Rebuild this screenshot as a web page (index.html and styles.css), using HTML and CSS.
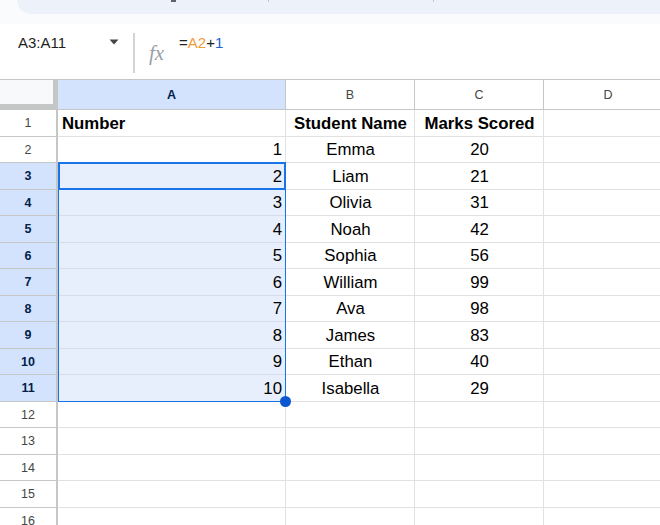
FILE: index.html
```html
<!DOCTYPE html>
<html>
<head>
<meta charset="utf-8">
<link rel="stylesheet" href="styles.css">
</head>
<body>
<div class="topbar">
  <div class="pill">
    <span class="glyph"></span>
    <span class="tick t1"></span>
    <span class="tick t2"></span>
  </div>
</div>
<div class="formula-bar">
  <div class="namebox">
    <span class="range">A3:A11</span>
    <svg class="caret" width="10" height="6" viewBox="0 0 10 6"><path d="M0.5 0.5 L9.5 0.5 L5 5.5 Z" fill="#444746"/></svg>
  </div>
  <div class="sep"></div>
  <div class="fx">fx</div>
  <div class="formula"><span class="op">=</span><span class="ref">A2</span><span class="op">+</span><span class="lit">1</span></div>
</div>
<div class="sheet">
  <div class="corner"></div>
  <div class="colh selh">A</div>
  <div class="colh">B</div>
  <div class="colh">C</div>
  <div class="colh">D</div>

  <div class="rowh">1</div><div class="cell left bold">Number</div><div class="cell center bold">Student Name</div><div class="cell center bold">Marks Scored</div><div class="cell"></div>
  <div class="rowh">2</div><div class="cell right">1</div><div class="cell center">Emma</div><div class="cell center">20</div><div class="cell"></div>
  <div class="rowh selr">3</div><div class="cell right sel">2</div><div class="cell center">Liam</div><div class="cell center">21</div><div class="cell"></div>
  <div class="rowh selr">4</div><div class="cell right sel">3</div><div class="cell center">Olivia</div><div class="cell center">31</div><div class="cell"></div>
  <div class="rowh selr">5</div><div class="cell right sel">4</div><div class="cell center">Noah</div><div class="cell center">42</div><div class="cell"></div>
  <div class="rowh selr">6</div><div class="cell right sel">5</div><div class="cell center">Sophia</div><div class="cell center">56</div><div class="cell"></div>
  <div class="rowh selr">7</div><div class="cell right sel">6</div><div class="cell center">William</div><div class="cell center">99</div><div class="cell"></div>
  <div class="rowh selr">8</div><div class="cell right sel">7</div><div class="cell center">Ava</div><div class="cell center">98</div><div class="cell"></div>
  <div class="rowh selr">9</div><div class="cell right sel">8</div><div class="cell center">James</div><div class="cell center">83</div><div class="cell"></div>
  <div class="rowh selr">10</div><div class="cell right sel">9</div><div class="cell center">Ethan</div><div class="cell center">40</div><div class="cell"></div>
  <div class="rowh selr">11</div><div class="cell right sel">10</div><div class="cell center">Isabella</div><div class="cell center">29</div><div class="cell"></div>
  <div class="rowh">12</div><div class="cell"></div><div class="cell"></div><div class="cell"></div><div class="cell"></div>
  <div class="rowh">13</div><div class="cell"></div><div class="cell"></div><div class="cell"></div><div class="cell"></div>
  <div class="rowh">14</div><div class="cell"></div><div class="cell"></div><div class="cell"></div><div class="cell"></div>
  <div class="rowh">15</div><div class="cell"></div><div class="cell"></div><div class="cell"></div><div class="cell"></div>
  <div class="rowh">16</div><div class="cell"></div><div class="cell"></div><div class="cell"></div><div class="cell"></div>

  <div class="range-box"></div>
  <div class="active-box"></div>
  <div class="fill-handle"></div>
</div>
</body>
</html>
```

FILE: styles.css
```css
html, body {
  margin: 0;
  padding: 0;
  width: 660px;
  height: 525px;
  overflow: hidden;
  background: #ffffff;
  font-family: "Liberation Sans", Arial, sans-serif;
}

.topbar {
  height: 24px;
  background: #f9fbfd;
  position: relative;
}

.pill {
  position: relative;
  margin-left: 17px;
  height: 14px;
  background: #edf2fa;
  border-radius: 0 0 0 18px;
}

.glyph {
  position: absolute;
  left: 154px;
  top: 0;
  width: 5px;
  height: 2px;
  background: #5f6368;
}

.tick {
  position: absolute;
  top: 0;
  width: 1px;
  height: 2px;
  background: #c4c7c5;
}
.t1 { left: 251px; }
.t2 { left: 416px; }

.formula-bar {
  height: 55px;
  display: flex;
  align-items: flex-start;
  background: #ffffff;
}

.namebox {
  width: 133px;
  display: flex;
  align-items: flex-start;
  padding-top: 10px;
  padding-left: 18px;
  box-sizing: border-box;
  height: 55px;
}

.range {
  font-size: 15px;
  color: #1f1f1f;
  line-height: 17px;
  width: 91px;
}

.caret {
  margin-top: 5px;
}

.sep {
  width: 2px;
  height: 40px;
  margin-top: 9px;
  background: #d3d3d3;
}

.fx {
  margin-left: 14px;
  margin-top: 19px;
  font-family: "Liberation Serif", "Times New Roman", serif;
  font-style: italic;
  font-size: 21px;
  line-height: 20px;
  color: #9aa0a6;
  width: 30px;
}

.formula {
  margin-top: 10px;
  font-size: 15px;
  line-height: 17px;
}
.op { color: #202124; }
.ref { color: #f29b38; }
.lit { color: #1a5fd6; }

.sheet {
  position: relative;
  display: grid;
  grid-template-columns: 58px 228px 129px 129px 129px;
  grid-template-rows: 30px;
  grid-auto-rows: 26.5px;
  border-top: 1px solid #c4c7c5;
}

.corner {
  box-sizing: border-box;
  background: #f8f9fa;
  border-right: 5px solid #c4c7c5;
  border-bottom: 6px solid #c4c7c5;
  width: 58px;
}

.colh {
  box-sizing: border-box;
  border-right: 1px solid #c4c7c5;
  border-bottom: 1px solid #c4c7c5;
  display: flex;
  align-items: center;
  justify-content: center;
  font-size: 12.5px;
  color: #444746;
  padding-top: 1px;
}

.selh {
  background: #d3e3fd;
  color: #041e49;
  font-weight: bold;
}

.rowh {
  box-sizing: border-box;
  border-right: 2px solid #c4c7c5;
  border-bottom: 1px solid #c4c7c5;
  display: flex;
  align-items: center;
  justify-content: center;
  font-size: 12.5px;
  color: #444746;
  padding-top: 1px;
}

.selr {
  background: #d3e3fd;
  color: #041e49;
  font-weight: bold;
}

.cell {
  box-sizing: border-box;
  border-right: 1px solid #e1e1e1;
  border-bottom: 1px solid #e1e1e1;
  display: flex;
  align-items: center;
  font-size: 16.8px;
  color: #000000;
  padding: 2px 3px 0 4px;
  white-space: nowrap;
  overflow: hidden;
}

.left { justify-content: flex-start; }
.right { justify-content: flex-end; }
.center { justify-content: center; }
.bold { font-weight: bold; }

.sel {
  background: #e7effd;
  border-bottom-color: #d7dde8;
}

.range-box {
  position: absolute;
  left: 58px;
  top: 82px;
  width: 228px;
  height: 239.5px;
  box-sizing: border-box;
  border: 1px solid #1a73e8;
  pointer-events: none;
}

.active-box {
  position: absolute;
  left: 58px;
  top: 82px;
  width: 228px;
  height: 27.5px;
  box-sizing: border-box;
  border: 2px solid #1a73e8;
  pointer-events: none;
}

.fill-handle {
  position: absolute;
  left: 280px;
  top: 316px;
  width: 11px;
  height: 11px;
  border-radius: 50%;
  background: #0b57d0;
}
```
